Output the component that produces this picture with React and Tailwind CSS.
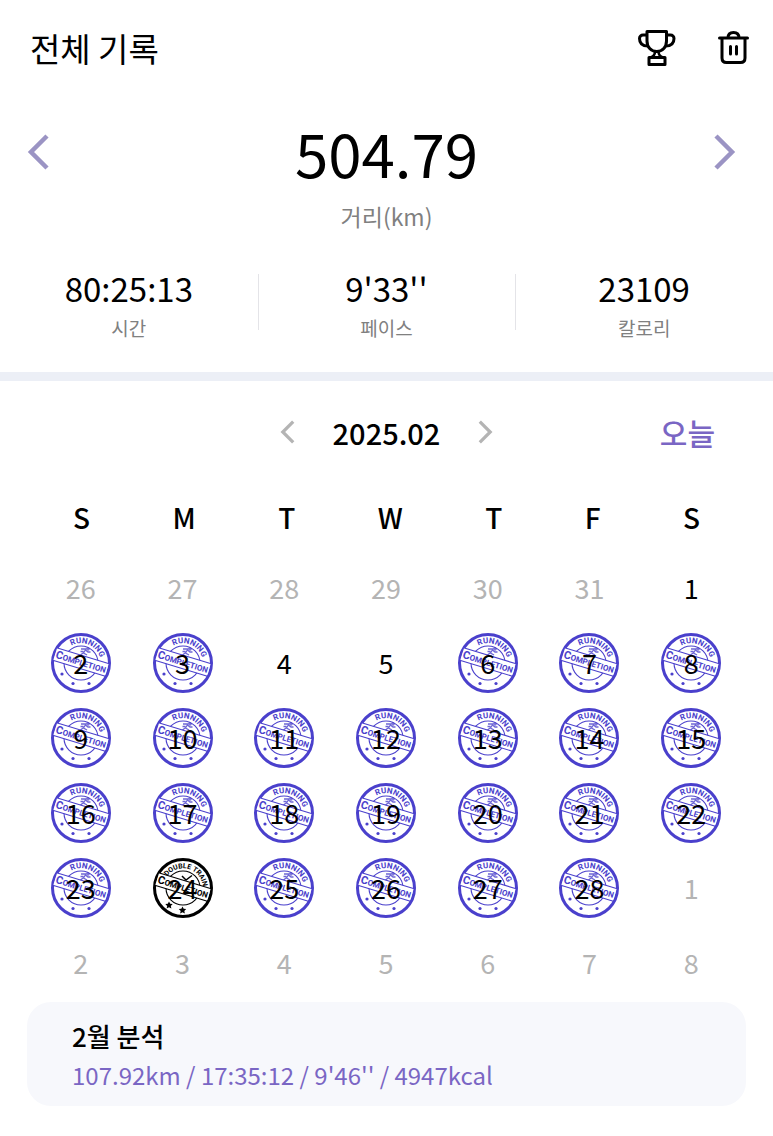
import React from "react";
import clsx from "clsx";

const WEEKDAYS = ["S", "M", "T", "W", "T", "F", "S"];

const STATS = [
  { value: "80:25:13", label: "시간" },
  { value: "9'33''", label: "페이스" },
  { value: "23109", label: "칼로리" },
];

const REST_DAYS = [1, 4, 5];
const DOUBLE_DAYS = [24];

const buildDays = () => {
  const days = [];
  for (let d = 26; d <= 31; d++) days.push({ day: d, muted: true });
  for (let d = 1; d <= 28; d++) {
    let stamp = "running";
    if (REST_DAYS.includes(d)) stamp = null;
    if (DOUBLE_DAYS.includes(d)) stamp = "double";
    days.push({ day: d, stamp });
  }
  for (let d = 1; d <= 8; d++) days.push({ day: d, muted: true });
  return days;
};

const TrophyIcon = () => (
  <svg width="40" height="40" viewBox="0 0 40 40" fill="none" stroke="currentColor" strokeWidth="3" strokeLinejoin="round">
    <path d="M11 3.5h19.500v9.500c0 6-4 10.500-9.750 10.500S11 19 11 13z" />
    <path d="M11 7H7C5 7 3.500 8.500 3.500 10.500c0 5 2.500 7.500 8.500 7.500" />
    <path d="M30.500 7H34.500c2 0 3.500 1.500 3.500 3.500 0 5-2.500 7.500-8.500 7.500" />
    <path d="M19 23.500c0 3-1.500 5-4.500 6h12.500c-3-1-4.500-3-4.500-6z" strokeWidth="2.500" />
    <path d="M13 29.500h16v7h-16z" />
  </svg>
);

const TrashIcon = () => (
  <svg width="40" height="40" viewBox="0 0 40 40" fill="none" stroke="currentColor" strokeWidth="3">
    <path d="M6.500 10h28" strokeLinecap="round" />
    <path d="M15 10c0-3.500 2-5.500 5.500-5.500S26 6.500 26 10" />
    <path d="M9 10v20c0 3 1.500 4.500 4.500 4.500h14c3 0 4.500-1.500 4.500-4.500V10" />
    <path d="M17.500 18.500v7.500M23.500 18.500v7.500" strokeLinecap="round" />
  </svg>
);

const Chevron = ({ dir, className, strokeWidth }) => (
  <svg viewBox="0 0 24 40" className={className} fill="none" stroke="currentColor" strokeWidth={strokeWidth}>
    <path d={dir === "left" ? "M20 4L4 20l16 16" : "M4 4l16 16L4 36"} />
  </svg>
);

const Stamp = ({ type, id }) => {
  const isDouble = type === "double";
  return (
    <svg
      viewBox="-31 -31 62 62"
      aria-hidden="true"
      className={clsx(
        "absolute left-1/2 top-1/2 h-[62px] w-[62px] -translate-x-1/2 -translate-y-1/2 font-['Roboto',sans-serif]",
        isDouble ? "text-black" : "text-[#4a40cc]"
      )}
    >
      <circle r="28.500" fill="none" stroke="currentColor" strokeWidth="3" />
      <circle r="17" fill="none" stroke="currentColor" strokeWidth="1.100" />
      <path
        id={id}
        d={isDouble ? "M-16-11.600A19.800 19.800 0 1 1 0 19.800" : "M-9.500-17.400A19.800 19.800 0 1 1 0 19.800"}
        fill="none"
      />
      <text fontSize={isDouble ? "7" : "8"} fontWeight="700" fill="currentColor">
        <textPath href={`#${id}`}>{isDouble ? "DOUBLE TRAIN" : "RUNNING"}</textPath>
      </text>

      {/* runner / check on top of the ribbon */}
      {isDouble ? (
        <path d="M-1-12l4 4 6-4.500" fill="none" stroke="currentColor" strokeWidth="1.500" />
      ) : (
        <g fill="none" stroke="currentColor" strokeWidth="1.300" opacity="0.800">
          <circle cx="7" cy="-14" r="1.100" />
          <path d="M0-14h5l-2.500 4 3.500 2M2-10l-3 2.500M4.500-13l2.500 2h2.500M-.500-11.500h3" />
        </g>
      )}

      {/* ribbon */}
      <g transform="translate(0 -1) rotate(17)">
        <path d="M-27-6.500h54v13h-54z" fill="white" />
        <path d="M-27.500-6.500H27.500M-27.500 6.500H27.500" stroke="currentColor" strokeWidth="1.100" />
        <text x="0" y="3.500" textAnchor="middle" fontWeight="700" fill="currentColor">
          <tspan fontSize="11">C</tspan>
          <tspan fontSize="8">OMPLETION</tspan>
        </text>
      </g>

      {isDouble ? (
        <g fill="currentColor">
          <path d="M-14 13.500l1.200 2.300 2.500.300-1.900 1.800.600 2.600-2.400-1.300-2.400 1.300.600-2.600-1.900-1.800 2.500-.300z" />
          <path d="M-.500 18.500l1.200 2.300 2.500.300-1.900 1.800.600 2.600-2.400-1.300-2.400 1.300.600-2.600-1.900-1.800 2.500-.300z" />
        </g>
      ) : (
        <g fill="currentColor">
          <circle cx="-19" cy="11" r="1.600" />
          <circle cx="-8" cy="20.500" r="1.600" />
          <circle cx="8" cy="20.500" r="1.600" />
        </g>
      )}
    </svg>
  );
};

const App = () => {
  const days = buildDays();

  return (
    <div className="min-h-screen bg-white pb-[30px] font-['Noto_Sans_CJK_KR',sans-serif] text-black">
      {/* Header */}
      <header className="flex h-24 items-center justify-between pl-[30px] pr-5">
        <h1 className="text-[33px] leading-10">전체 기록</h1>
        <div className="flex items-center gap-[37px]">
          <button type="button" aria-label="기록 순위">
            <TrophyIcon />
          </button>
          <button type="button" aria-label="삭제">
            <TrashIcon />
          </button>
        </div>
      </header>

      {/* Totals */}
      <section className="pt-4">
        <div className="grid h-20 grid-cols-3 items-center">
          <button type="button" aria-label="이전" className="ml-[27px] justify-self-start text-[#9b94c4]">
            <Chevron dir="left" strokeWidth="4.500" className="h-10 w-6" />
          </button>
          <p className="text-center text-[60px] leading-[80px]">504.79</p>
          <button type="button" aria-label="다음" className="mr-[37px] justify-self-end text-[#9b94c4]">
            <Chevron dir="right" strokeWidth="4.500" className="h-10 w-6" />
          </button>
        </div>
        <p className="mt-2 text-center text-[23px] leading-8 text-[#808080]">거리(km)</p>

        <dl className="mt-9 grid grid-cols-3 pb-8">
          {STATS.map((stat, i) => (
            <div key={stat.label} className="relative flex flex-col-reverse items-center gap-2">
              <dt className="text-[19px] leading-6 text-[#808080]">{stat.label}</dt>
              <dd className="text-[33px] leading-10">{stat.value}</dd>
              {i > 0 && <span className="absolute left-0 top-1.5 h-14 w-px bg-[#e4e4e8]" />}
            </div>
          ))}
        </dl>
      </section>

      <div className="h-[9px] bg-[#eceff6]" />

      {/* Calendar */}
      <section>
        <div className="grid h-[102px] grid-cols-3 items-center">
          <div className="col-start-2 flex items-center justify-center gap-[37px]">
            <button type="button" aria-label="이전 달" className="text-[#b4b4b4]">
              <Chevron dir="left" strokeWidth="5" className="h-[26px] w-4" />
            </button>
            <h2 className="text-[29px] font-medium leading-10">2025.02</h2>
            <button type="button" aria-label="다음 달" className="text-[#b4b4b4]">
              <Chevron dir="right" strokeWidth="5" className="h-[26px] w-4" />
            </button>
          </div>
          <button type="button" className="mr-[58px] justify-self-end text-[30px] font-medium leading-10 text-[#7a66c4]">
            오늘
          </button>
        </div>

        <div className="flex h-[67px] items-center justify-between px-[73px] text-[28px] font-medium leading-10">
          {WEEKDAYS.map((name, i) => (
            <span key={i}>{name}</span>
          ))}
        </div>

        <div className="grid grid-cols-7 pl-[30px] pr-[31px]">
          {days.map(({ day, muted, stamp }, i) => (
            <button
              key={i}
              type="button"
              className={clsx(
                "relative flex h-[75px] items-center justify-center text-[27px] leading-10",
                muted && "text-[#b4b4b4]"
              )}
            >
              {stamp && <Stamp type={stamp} id={`stamp-${day}`} />}
              <span className="relative">{day}</span>
            </button>
          ))}
        </div>
      </section>

      {/* Monthly summary */}
      <section className="mx-[27px] mt-0.5 rounded-3xl bg-[#f7f8fc] px-[45px] pb-3 pt-3.5">
        <h3 className="text-[26px] font-medium leading-10">2월 분석</h3>
        <p className="text-[24px] leading-[38px] text-[#7a66c4]">107.92km / 17:35:12 / 9'46'' / 4947kcal</p>
      </section>
    </div>
  );
};

export default App;
